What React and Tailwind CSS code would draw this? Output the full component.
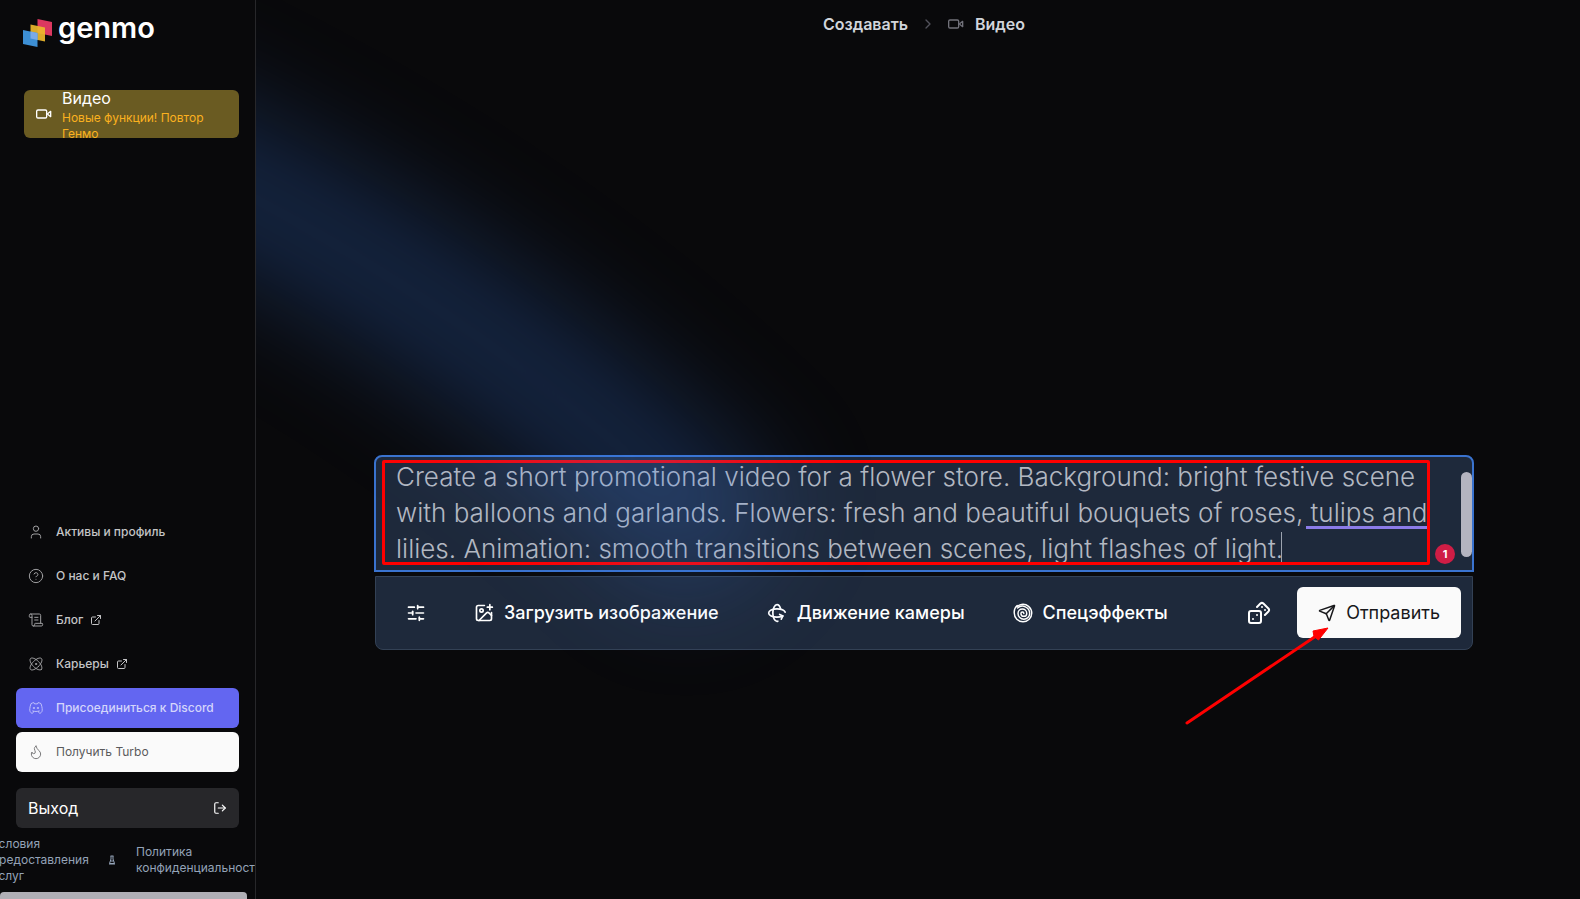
import React, { useState } from 'react';
import {
  Atom,
  ChevronRight,
  CircleHelp,
  Dices,
  ExternalLink,
  Flame,
  ImagePlus,
  LogOut,
  Rotate3d,
  ScrollText,
  Send,
  SlidersHorizontal,
  User
} from 'lucide-react';
import { TbBrandDiscord } from 'react-icons/tb';

const PROMPT =
  'Create a short promotional video for a flower store. Background: bright festive scene with balloons and garlands. Flowers: fresh and beautiful bouquets of roses, tulips and lilies. Animation: smooth transitions between scenes, light flashes of light.';

const navItems = [
  { label: 'Активы и профиль', icon: User },
  { label: 'О нас и FAQ', icon: CircleHelp },
  { label: 'Блог', icon: ScrollText, external: true },
  { label: 'Карьеры', icon: Atom, external: true },
  { label: 'Присоединиться к Discord', icon: TbBrandDiscord, variant: 'discord' },
  { label: 'Получить Turbo', icon: Flame, variant: 'turbo' }
];

const navVariants = {
  plain: 'font-medium text-[#c4c4c6]',
  discord: 'font-medium bg-[#6366f1] text-[#d4d5fb]',
  turbo: 'bg-[#fafafa] text-[#5a5a5c]'
};

const Logo = () => (
  <a href="#" className="flex items-start gap-1.5 text-white">
    <svg className="h-8 w-[29px]" viewBox="0 0 29 32" aria-hidden="true">
      <path d="M14.500 3L29 6v14l-14.500-3z" fill="#dc3860" />
      <path d="M7.500 8.500l14.500 3v14l-14.500-3z" fill="#edb92c" fillOpacity="0.92" />
      <path d="M0 14l14.500 3v14L0 28z" fill="#3d8fd4" />
      <path d="M7.500 15.500l7 1.500v7l-7-1.500z" fill="#7aaae8" />
    </svg>
    <span className="text-[29px] leading-6 font-semibold">genmo</span>
  </a>
);

const VideoIcon = ({ className, strokeWidth = 2 }) => (
  <svg
    className={className}
    viewBox="0 0 24 24"
    fill="none"
    stroke="currentColor"
    strokeWidth={strokeWidth}
    strokeLinecap="round"
    strokeLinejoin="round"
    aria-hidden="true"
  >
    <path d="M22 8l-5 4 5 4z" />
    <rect x="1" y="6" width="15" height="12" rx="2" />
  </svg>
);

const SpiralIcon = ({ className }) => (
  <svg className={className} viewBox="0 0 24 24" fill="none" stroke="currentColor" strokeWidth="1.75" strokeLinecap="round" aria-hidden="true">
    <path d="M13 12.500A1.750 1.750 0 0 0 9.500 12.500A3.500 3.500 0 0 0 16.500 12.500A5.250 5.250 0 0 0 6 12.500A7 7 0 0 0 20 12.500A8.750 8.750 0 0 0 5.500 6" />
    <path d="M5 3A11 11 0 0 0 1.500 12A10.500 10.500 0 0 0 22.500 12A10.500 10.500 0 0 0 10 1.800Q7.500 2.200 5.500 4" />
  </svg>
);

const FlaskIcon = ({ className }) => (
  <svg className={className} viewBox="0 0 8 10" fill="none" stroke="currentColor" strokeWidth="1" aria-hidden="true">
    <path d="M2.500 1h3M3 1v3L1.500 8.500h5L5 4V1M2.500 6h3M1 9h6" />
  </svg>
);

const NavItem = ({ label, icon: Icon, external = false, variant = 'plain' }) => (
  <a href="#" className={`flex h-10 items-center gap-3 rounded-md px-3 text-xs ${navVariants[variant]}`}>
    <Icon className="h-4 w-4 opacity-80" strokeWidth={1.5} />
    <span className="flex items-center gap-[7px]">
      {label}
      {external && <ExternalLink className="h-3 w-3" strokeWidth={2} />}
    </span>
  </a>
);

const Sidebar = () => (
  <aside className="flex h-screen w-64 shrink-0 flex-col overflow-hidden border-r border-[#27272a]">
    <div className="px-[23px] pt-4">
      <Logo />
    </div>

    <a href="#" className="mx-6 mt-[42px] mr-4 flex h-12 items-center gap-2.5 overflow-hidden rounded-md bg-[#6a5b22] px-3">
      <VideoIcon className="h-4 w-4 shrink-0 text-white" />
      <span className="flex flex-col">
        <span className="text-base leading-6 text-white">Видео</span>
        <span className="text-xs leading-4 text-[#fbb11f]">Новые функции! Повтор Генмо</span>
      </span>
    </a>

    <nav className="mt-auto flex flex-col gap-1 pr-4 pl-4">
      {navItems.map((item) => (
        <NavItem key={item.label} {...item} />
      ))}
    </nav>

    <button type="button" className="mx-4 mt-4 flex h-10 shrink-0 items-center justify-between rounded-md bg-[#27272a] px-3 text-base text-white">
      Выход
      <LogOut className="h-3.5 w-3.5" strokeWidth={2} />
    </button>

    <footer className="mt-2 -ml-2 flex shrink-0 items-center gap-5 text-xs leading-4 text-[#94a3b8]">
      <a href="#" className="w-24 shrink-0">Условия предоставления услуг</a>
      <FlaskIcon className="h-2.5 w-2 shrink-0" />
      <a href="#" className="shrink-0">
        Политика
        <br />
        конфиденциальности
      </a>
    </footer>

    <div className="mt-2 mr-2 h-[7px] shrink-0 rounded-t bg-[#b0afb6]" />
  </aside>
);

const ToolButton = ({ icon: Icon, children, ...props }) => (
  <button type="button" className="flex items-center gap-2.5 text-lg font-medium text-white" {...props}>
    <Icon className="h-5 w-5" strokeWidth={2} />
    {children}
  </button>
);

/* Blue beam that crosses the workspace and tints whatever is below it */
const Glow = () => (
  <svg className="pointer-events-none absolute inset-0 h-full w-full" aria-hidden="true">
    <defs>
      <filter id="beam" filterUnits="userSpaceOnUse" x="-400" y="-200" width="1500" height="1100" colorInterpolationFilters="sRGB">
        <feGaussianBlur stdDeviation="54" />
      </filter>
    </defs>
    <path
      d="M-160 120Q220 290 480 555"
      fill="none"
      stroke="#3b82f6"
      strokeOpacity="0.24"
      strokeWidth="140"
      filter="url(#beam)"
    />
  </svg>
);

const Annotations = () => (
  <div className="pointer-events-none absolute inset-0">
    <div className="absolute top-[5px] right-11 left-2 h-[105px] rounded-xs border-3 border-[#ff0000]" />
    <svg className="absolute top-[168px] right-[140px] h-[106px] w-[150px]" viewBox="0 0 150 106" aria-hidden="true">
      <path d="M3 100L132 13" stroke="#ff0000" strokeWidth="3" strokeLinecap="round" />
      <path d="M144 5l-9.500 12-4.500-3.500-1-5.500z" fill="#ff0000" stroke="#ff0000" />
    </svg>
  </div>
);

const Composer = () => {
  const [prompt, setPrompt] = useState(PROMPT);

  return (
    <form className="mt-[407px] flex w-full max-w-[1100px] flex-col gap-1" onSubmit={(e) => e.preventDefault()}>
      <div className="relative">
        <textarea
          aria-label="Prompt"
          rows={3}
          value={prompt}
          onChange={(e) => setPrompt(e.target.value)}
          className="block h-[117px] w-full resize-none overflow-hidden rounded-t-lg border-2 border-[#3a73cf] bg-[#1e293b] pt-0.5 pr-10 pl-5 text-[26px] leading-9 font-light text-[#b3b8c2] outline-none"
        />
        <span className="absolute top-[71px] right-[47px] h-[3px] w-[121px] bg-[#8b7be8]" />
        <span className="absolute top-[77px] right-[192px] h-[30px] w-px bg-[#9ca3af]" />
        <span className="absolute right-[19px] bottom-2 flex h-5 w-5 items-center justify-center rounded-full bg-[#cf1d45] text-[11px] font-bold text-white">1</span>
        <span className="absolute top-[17px] right-[2px] h-[85px] w-[11px] rounded-full bg-[#b4b4c0]" />
        <Annotations />
      </div>

      <div className="mx-px flex h-[74px] items-center justify-between rounded-b-lg border border-[#334155] bg-[#1e293b] pr-[11px] pb-px pl-[30px]">
        <div className="flex items-center gap-12">
          <ToolButton icon={SlidersHorizontal} aria-label="Настройки" />
          <ToolButton icon={ImagePlus}>Загрузить изображение</ToolButton>
          <ToolButton icon={Rotate3d}>Движение камеры</ToolButton>
          <ToolButton icon={SpiralIcon}>Спецэффекты</ToolButton>
        </div>
        <div className="flex items-center gap-[26px]">
          <button type="button" aria-label="Случайный запрос" className="text-white">
            <Dices className="h-6 w-6" strokeWidth={2} />
          </button>
          <button type="submit" className="flex h-[51px] items-center gap-2.5 rounded-md bg-[#fafafa] px-[21px] text-lg text-[#18181b]">
            <Send className="h-[18px] w-[18px]" strokeWidth={2} />
            Отправить
          </button>
        </div>
      </div>
    </form>
  );
};

const App = () => (
  <div className="flex min-h-screen bg-[#09090b] font-[Inter,'Noto_Sans',sans-serif]">
    <Sidebar />
    <main className="relative flex min-w-0 flex-1 flex-col items-center overflow-hidden pl-3">
      <nav className="flex h-12 items-center font-semibold text-[#d1d5db]" aria-label="Breadcrumb">
        <a href="#">Создавать</a>
        <ChevronRight className="mx-3 h-4 w-4 text-[#52525b]" strokeWidth={2} />
        <a href="#" className="flex items-center gap-[11px]">
          <VideoIcon className="h-4 w-4 text-[#71717a]" />
          Видео
        </a>
      </nav>
      <Composer />
      <Glow />
    </main>
  </div>
);

export default App;
